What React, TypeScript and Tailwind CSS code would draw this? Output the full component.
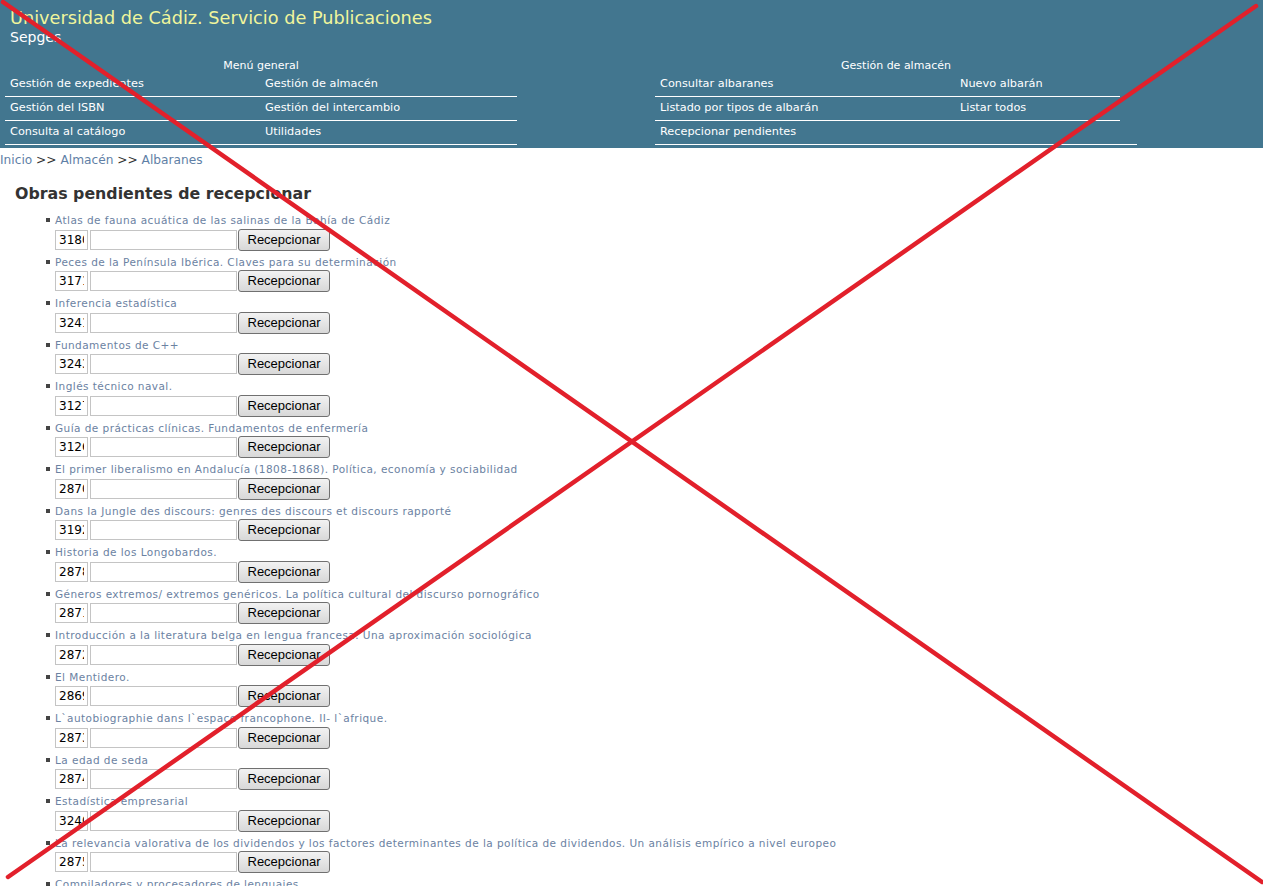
import React from "react";

const general = [
  ["Gestión de expedientes", "Gestión de almacén"],
  ["Gestión del ISBN", "Gestión del intercambio"],
  ["Consulta al catálogo", "Utilidades"],
];

const almacen = [
  ["Consultar albaranes", "Nuevo albarán"],
  ["Listado por tipos de albarán", "Listar todos"],
  ["Recepcionar pendientes", ""],
];

const obras = [
  ["Atlas de fauna acuática de las salinas de la Bahía de Cádiz", "31801"],
  ["Peces de la Península Ibérica. Claves para su determinación", "31712"],
  ["Inferencia estadística", "32411"],
  ["Fundamentos de C++", "32433"],
  ["Inglés técnico naval.", "31277"],
  ["Guía de prácticas clínicas. Fundamentos de enfermería", "31266"],
  ["El primer liberalismo en Andalucía (1808-1868). Política, economía y sociabilidad", "28700"],
  ["Dans la Jungle des discours: genres des discours et discours rapporté", "31922"],
  ["Historia de los Longobardos.", "28788"],
  ["Géneros extremos/ extremos genéricos. La política cultural del discurso pornográfico", "28711"],
  ["Introducción a la literatura belga en lengua francesa. Una aproximación sociológica", "28722"],
  ["El Mentidero.", "28699"],
  ["L`autobiographie dans l`espace francophone. II- l`afrique.", "28733"],
  ["La edad de seda", "28744"],
  ["Estadística empresarial", "32400"],
  ["La relevancia valorativa de los dividendos y los factores determinantes de la política de dividendos. Un análisis empírico a nivel europeo", "28755"],
  ["Compiladores y procesadores de lenguajes", "28766"],
];

function MenuTable({ title, rows, col1, widths }: { title: string; rows: string[][]; col1: string; widths: string[] }) {
  return (
    <div className="flex flex-col">
      <div className="h-[15px] text-center text-[11px] leading-[15px] text-white">{title}</div>
      {rows.map((r, i) => (
        <div key={i} className={`flex h-[24px] items-center border-b border-white ${widths[i]}`}>
          <div className={`${col1} pl-[5px]`}>{r[0]}</div>
          <div>{r[1]}</div>
        </div>
      ))}
    </div>
  );
}

export default function App() {
  return (
    <div className="relative min-h-screen bg-white font-['DejaVu_Sans',sans-serif]">
      {/* Header */}
      <header className="h-[148px] bg-[#42768f] pt-[6px]">
        <h1 className="pl-[10px] text-[17.7px] leading-[24px] text-[#f0f59c]">Universidad de Cádiz. Servicio de Publicaciones</h1>
        <div className="pl-[10px] text-[14px] leading-[14px] text-white">Sepges</div>
        <div className="mt-[14px] flex text-[11.3px] text-white">
          <div className="ml-[5px] w-[512px]">
            <MenuTable title="Menú general" rows={general} col1="w-[260px]" widths={["w-[512px]", "w-[512px]", "w-[512px]"]} />
          </div>
          <div className="ml-[138px] w-[482px]">
            <MenuTable title="Gestión de almacén" rows={almacen} col1="w-[305px]" widths={["w-[465px]", "w-[465px]", "w-[482px]"]} />
          </div>
        </div>
      </header>

      {/* Breadcrumb */}
      <div className="mt-[3px] text-[12.2px] leading-[18px] text-[#333]">
        <a className="text-[#5f7fa6]">Inicio</a> &gt;&gt; <a className="text-[#5f7fa6]">Almacén</a> &gt;&gt;{" "}
        <a className="text-[#5f7fa6]">Albaranes</a>
      </div>

      <main className="pl-[15px]">
        <h2 className="mt-[15px] text-[15.8px] font-bold leading-[20px] text-[#333]">Obras pendientes de recepcionar</h2>
        <ul className="mt-[5px] pl-[31px]">
          {obras.map(([t, v], i) => (
            <li key={i} className="flex flex-col">
              <div className="relative h-[19.5px] pl-[9px] text-[10.5px] leading-[22px] tracking-[0.45px] text-[#6b82a2]">
                <span className="absolute left-0 top-[9px] h-[4px] w-[4px] bg-[#444]" />
                <a>{t}</a>
              </div>
              <div className="flex h-[22px] items-center pl-[9px]">
                <input
                  defaultValue={v}
                  className="h-[20px] w-[33px] border border-[#c4c4c4] px-[3px] text-[12px] text-black outline-none"
                />
                <input className="ml-[2px] h-[20px] w-[147px] border border-[#c4c4c4] outline-none" />
                <button className="ml-[1px] h-[22px] w-[92px] rounded-[3px] border border-[#707070] bg-gradient-to-b from-[#f2f2f2] to-[#d8d8d8] font-['Liberation_Sans',sans-serif] text-[13px] text-black">
                  Recepcionar
                </button>
              </div>
            </li>
          ))}
        </ul>
      </main>

      {/* red cross drawn over the page */}
      <svg className="pointer-events-none absolute left-0 top-0" width="1263" height="886" viewBox="0 0 1263 886">
        <line x1="3" y1="2" x2="1262" y2="882" stroke="#e2202b" strokeWidth="4.5" strokeLinecap="round" />
        <line x1="1256" y1="6" x2="8" y2="877" stroke="#e2202b" strokeWidth="4.5" strokeLinecap="round" />
      </svg>
    </div>
  );
}
